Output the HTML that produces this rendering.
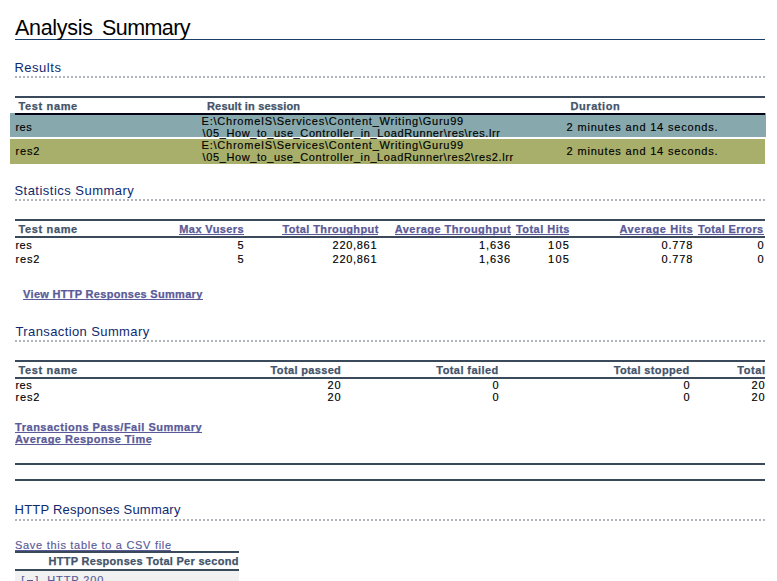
<!DOCTYPE html><html><head><meta charset='utf-8'><style>html,body{margin:0;padding:0;background:#fff;width:777px;height:581px;overflow:hidden;position:relative}</style></head><body><div style='position:absolute;left:10px;top:113px;width:756px;height:24px;background:#87a9ad;'></div><div style='position:absolute;left:10px;top:139px;width:755px;height:25px;background:#a7af6b;'></div><div style='position:absolute;left:15px;top:571px;width:224px;height:10px;background:#f1f1f1;'></div><div style='position:absolute;left:27px;top:580px;width:6px;height:1px;background:#5a5a98;'></div><div style='position:absolute;left:15px;top:39px;width:750px;height:1px;background:#1b3f6c;'></div><div style='position:absolute;left:15px;top:76px;width:750px;height:2px;background:repeating-linear-gradient(90deg,#b0b4bb 0 2px,transparent 2px 4px)'></div><div style='position:absolute;left:15px;top:199px;width:750px;height:2px;background:repeating-linear-gradient(90deg,#b0b4bb 0 2px,transparent 2px 4px)'></div><div style='position:absolute;left:15px;top:340px;width:750px;height:2px;background:repeating-linear-gradient(90deg,#b0b4bb 0 2px,transparent 2px 4px)'></div><div style='position:absolute;left:15px;top:519px;width:750px;height:2px;background:repeating-linear-gradient(90deg,#b0b4bb 0 2px,transparent 2px 4px)'></div><div style='position:absolute;left:15px;top:96px;width:750px;height:2px;background:#3b4a5a;'></div><div style='position:absolute;left:15px;top:219px;width:750px;height:2px;background:#3b4a5a;'></div><div style='position:absolute;left:15px;top:236px;width:750px;height:2px;background:#3b4a5a;'></div><div style='position:absolute;left:15px;top:360px;width:750px;height:2px;background:#3b4a5a;'></div><div style='position:absolute;left:15px;top:377px;width:750px;height:2px;background:#3b4a5a;'></div><div style='position:absolute;left:15px;top:463px;width:750px;height:2px;background:#3b4a5a;'></div><div style='position:absolute;left:15px;top:479px;width:750px;height:2px;background:#3b4a5a;'></div><div style='position:absolute;left:15px;top:113px;width:750px;height:2px;background:#000014;'></div><div style='position:absolute;left:15px;top:551px;width:224px;height:2px;background:#3b4a5a;'></div><div style='position:absolute;left:15px;top:569px;width:224px;height:2px;background:#3b4a5a;'></div><div style='position:absolute;left:15.00px;top:8px;line-height:40px;white-space:pre;font-family:"Liberation Sans",sans-serif;font-size:21.5px;font-weight:normal;letter-spacing:-0.300px;color:#000000;;'>Analysis</div><div style='position:absolute;left:102.10px;top:8px;line-height:40px;white-space:pre;font-family:"Liberation Sans",sans-serif;font-size:21.5px;font-weight:normal;letter-spacing:-0.600px;color:#000000;;'>Summary</div><div style='position:absolute;left:14.40px;top:48px;line-height:40px;white-space:pre;font-family:"Liberation Sans",sans-serif;font-size:13px;font-weight:normal;letter-spacing:0.533px;color:#0e2a6e;-webkit-text-stroke:0px currentColor;'>Results</div><div style='position:absolute;left:18.50px;top:86px;line-height:40px;white-space:pre;font-family:"Liberation Sans",sans-serif;font-size:11.0px;font-weight:bold;letter-spacing:0.637px;color:#435369;-webkit-text-stroke:0.25px currentColor;'>Test name</div><div style='position:absolute;left:207.00px;top:86px;line-height:40px;white-space:pre;font-family:"Liberation Sans",sans-serif;font-size:11.0px;font-weight:bold;letter-spacing:0.163px;color:#435369;-webkit-text-stroke:0.25px currentColor;'>Result in session</div><div style='position:absolute;left:570.50px;top:86px;line-height:40px;white-space:pre;font-family:"Liberation Sans",sans-serif;font-size:11.0px;font-weight:bold;letter-spacing:0.571px;color:#435369;-webkit-text-stroke:0.25px currentColor;'>Duration</div><div style='position:absolute;left:15.40px;top:107px;line-height:40px;white-space:pre;font-family:"Liberation Sans",sans-serif;font-size:11.0px;font-weight:normal;letter-spacing:0.550px;color:#000000;-webkit-text-stroke:0.15px currentColor;'>res</div><div style='position:absolute;left:201.60px;top:101px;line-height:40px;white-space:pre;font-family:"Liberation Sans",sans-serif;font-size:11.0px;font-weight:normal;letter-spacing:0.760px;color:#000000;-webkit-text-stroke:0.15px currentColor;'>E:\ChromeIS\Services\Content_Writing\Guru99</div><div style='position:absolute;left:202.60px;top:113px;line-height:40px;white-space:pre;font-family:"Liberation Sans",sans-serif;font-size:11.0px;font-weight:normal;letter-spacing:0.604px;color:#000000;-webkit-text-stroke:0.15px currentColor;'>\05_How_to_use_Controller_in_LoadRunner\res\res.lrr</div><div style='position:absolute;left:566.60px;top:107px;line-height:40px;white-space:pre;font-family:"Liberation Sans",sans-serif;font-size:11.0px;font-weight:normal;letter-spacing:0.817px;color:#000000;-webkit-text-stroke:0.15px currentColor;'>2 minutes and 14 seconds.</div><div style='position:absolute;left:15.40px;top:131px;line-height:40px;white-space:pre;font-family:"Liberation Sans",sans-serif;font-size:11.0px;font-weight:normal;letter-spacing:0.867px;color:#000000;-webkit-text-stroke:0.15px currentColor;'>res2</div><div style='position:absolute;left:201.60px;top:125px;line-height:40px;white-space:pre;font-family:"Liberation Sans",sans-serif;font-size:11.0px;font-weight:normal;letter-spacing:0.760px;color:#000000;-webkit-text-stroke:0.15px currentColor;'>E:\ChromeIS\Services\Content_Writing\Guru99</div><div style='position:absolute;left:202.60px;top:137px;line-height:40px;white-space:pre;font-family:"Liberation Sans",sans-serif;font-size:11.0px;font-weight:normal;letter-spacing:0.598px;color:#000000;-webkit-text-stroke:0.15px currentColor;'>\05_How_to_use_Controller_in_LoadRunner\res2\res2.lrr</div><div style='position:absolute;left:566.60px;top:131px;line-height:40px;white-space:pre;font-family:"Liberation Sans",sans-serif;font-size:11.0px;font-weight:normal;letter-spacing:0.817px;color:#000000;-webkit-text-stroke:0.15px currentColor;'>2 minutes and 14 seconds.</div><div style='position:absolute;left:14.40px;top:171px;line-height:40px;white-space:pre;font-family:"Liberation Sans",sans-serif;font-size:13px;font-weight:normal;letter-spacing:0.482px;color:#0e2a6e;-webkit-text-stroke:0px currentColor;'>Statistics Summary</div><div style='position:absolute;left:18.50px;top:209px;line-height:40px;white-space:pre;font-family:"Liberation Sans",sans-serif;font-size:11.0px;font-weight:bold;letter-spacing:0.637px;color:#435369;-webkit-text-stroke:0.25px currentColor;'>Test name</div><div style='position:absolute;left:179.30px;top:209px;line-height:40px;white-space:pre;font-family:"Liberation Sans",sans-serif;font-size:11.0px;font-weight:bold;letter-spacing:0.400px;color:#5a5a98;-webkit-text-stroke:0.25px currentColor;'>Max Vusers</div><div style='position:absolute;left:179px;top:234px;width:65px;height:1px;background:#5a5a98'></div><div style='position:absolute;left:282.40px;top:209px;line-height:40px;white-space:pre;font-family:"Liberation Sans",sans-serif;font-size:11.0px;font-weight:bold;letter-spacing:0.380px;color:#5a5a98;-webkit-text-stroke:0.25px currentColor;'>Total Throughput</div><div style='position:absolute;left:282px;top:234px;width:96px;height:1px;background:#5a5a98'></div><div style='position:absolute;left:394.70px;top:209px;line-height:40px;white-space:pre;font-family:"Liberation Sans",sans-serif;font-size:11.0px;font-weight:bold;letter-spacing:0.476px;color:#5a5a98;-webkit-text-stroke:0.25px currentColor;'>Average Throughput</div><div style='position:absolute;left:395px;top:234px;width:116px;height:1px;background:#5a5a98'></div><div style='position:absolute;left:515.90px;top:209px;line-height:40px;white-space:pre;font-family:"Liberation Sans",sans-serif;font-size:11.0px;font-weight:bold;letter-spacing:0.478px;color:#5a5a98;-webkit-text-stroke:0.25px currentColor;'>Total Hits</div><div style='position:absolute;left:516px;top:234px;width:53px;height:1px;background:#5a5a98'></div><div style='position:absolute;left:619.50px;top:209px;line-height:40px;white-space:pre;font-family:"Liberation Sans",sans-serif;font-size:11.0px;font-weight:bold;letter-spacing:0.573px;color:#5a5a98;-webkit-text-stroke:0.25px currentColor;'>Average Hits</div><div style='position:absolute;left:620px;top:234px;width:73px;height:1px;background:#5a5a98'></div><div style='position:absolute;left:698.00px;top:209px;line-height:40px;white-space:pre;font-family:"Liberation Sans",sans-serif;font-size:11.0px;font-weight:bold;letter-spacing:0.327px;color:#5a5a98;-webkit-text-stroke:0.25px currentColor;'>Total Errors</div><div style='position:absolute;left:698px;top:234px;width:66px;height:1px;background:#5a5a98'></div><div style='position:absolute;left:15.40px;top:225px;line-height:40px;white-space:pre;font-family:"Liberation Sans",sans-serif;font-size:11.0px;font-weight:normal;letter-spacing:0.550px;color:#000000;-webkit-text-stroke:0.15px currentColor;'>res</div><div style='position:absolute;left:237.50px;top:225px;line-height:40px;white-space:pre;font-family:"Liberation Sans",sans-serif;font-size:11.0px;font-weight:normal;letter-spacing:0.800px;color:#000000;-webkit-text-stroke:0.15px currentColor;'>5</div><div style='position:absolute;left:332.60px;top:225px;line-height:40px;white-space:pre;font-family:"Liberation Sans",sans-serif;font-size:11.0px;font-weight:normal;letter-spacing:0.700px;color:#000000;-webkit-text-stroke:0.15px currentColor;'>220,861</div><div style='position:absolute;left:479.00px;top:225px;line-height:40px;white-space:pre;font-family:"Liberation Sans",sans-serif;font-size:11.0px;font-weight:normal;letter-spacing:0.925px;color:#000000;-webkit-text-stroke:0.15px currentColor;'>1,636</div><div style='position:absolute;left:548.00px;top:225px;line-height:40px;white-space:pre;font-family:"Liberation Sans",sans-serif;font-size:11.0px;font-weight:normal;letter-spacing:1.300px;color:#000000;-webkit-text-stroke:0.15px currentColor;'>105</div><div style='position:absolute;left:661.40px;top:225px;line-height:40px;white-space:pre;font-family:"Liberation Sans",sans-serif;font-size:11.0px;font-weight:normal;letter-spacing:0.875px;color:#000000;-webkit-text-stroke:0.15px currentColor;'>0.778</div><div style='position:absolute;left:757.50px;top:225px;line-height:40px;white-space:pre;font-family:"Liberation Sans",sans-serif;font-size:11.0px;font-weight:normal;letter-spacing:0.800px;color:#000000;-webkit-text-stroke:0.15px currentColor;'>0</div><div style='position:absolute;left:15.40px;top:239px;line-height:40px;white-space:pre;font-family:"Liberation Sans",sans-serif;font-size:11.0px;font-weight:normal;letter-spacing:0.867px;color:#000000;-webkit-text-stroke:0.15px currentColor;'>res2</div><div style='position:absolute;left:237.50px;top:239px;line-height:40px;white-space:pre;font-family:"Liberation Sans",sans-serif;font-size:11.0px;font-weight:normal;letter-spacing:0.800px;color:#000000;-webkit-text-stroke:0.15px currentColor;'>5</div><div style='position:absolute;left:332.60px;top:239px;line-height:40px;white-space:pre;font-family:"Liberation Sans",sans-serif;font-size:11.0px;font-weight:normal;letter-spacing:0.700px;color:#000000;-webkit-text-stroke:0.15px currentColor;'>220,861</div><div style='position:absolute;left:479.00px;top:239px;line-height:40px;white-space:pre;font-family:"Liberation Sans",sans-serif;font-size:11.0px;font-weight:normal;letter-spacing:0.925px;color:#000000;-webkit-text-stroke:0.15px currentColor;'>1,636</div><div style='position:absolute;left:548.00px;top:239px;line-height:40px;white-space:pre;font-family:"Liberation Sans",sans-serif;font-size:11.0px;font-weight:normal;letter-spacing:1.300px;color:#000000;-webkit-text-stroke:0.15px currentColor;'>105</div><div style='position:absolute;left:661.40px;top:239px;line-height:40px;white-space:pre;font-family:"Liberation Sans",sans-serif;font-size:11.0px;font-weight:normal;letter-spacing:0.875px;color:#000000;-webkit-text-stroke:0.15px currentColor;'>0.778</div><div style='position:absolute;left:757.50px;top:239px;line-height:40px;white-space:pre;font-family:"Liberation Sans",sans-serif;font-size:11.0px;font-weight:normal;letter-spacing:0.800px;color:#000000;-webkit-text-stroke:0.15px currentColor;'>0</div><div style='position:absolute;left:23.10px;top:274px;line-height:40px;white-space:pre;font-family:"Liberation Sans",sans-serif;font-size:11.0px;font-weight:bold;letter-spacing:0.300px;color:#5a5a98;-webkit-text-stroke:0.25px currentColor;'>View HTTP Responses Summary</div><div style='position:absolute;left:23px;top:299px;width:180px;height:1px;background:#5a5a98'></div><div style='position:absolute;left:15.50px;top:312px;line-height:40px;white-space:pre;font-family:"Liberation Sans",sans-serif;font-size:13px;font-weight:normal;letter-spacing:0.389px;color:#0e2a6e;-webkit-text-stroke:0px currentColor;'>Transaction Summary</div><div style='position:absolute;left:18.50px;top:350px;line-height:40px;white-space:pre;font-family:"Liberation Sans",sans-serif;font-size:11.0px;font-weight:bold;letter-spacing:0.637px;color:#435369;-webkit-text-stroke:0.25px currentColor;'>Test name</div><div style='position:absolute;left:270.60px;top:350px;line-height:40px;white-space:pre;font-family:"Liberation Sans",sans-serif;font-size:11.0px;font-weight:bold;letter-spacing:0.345px;color:#435369;-webkit-text-stroke:0.25px currentColor;'>Total passed</div><div style='position:absolute;left:436.30px;top:350px;line-height:40px;white-space:pre;font-family:"Liberation Sans",sans-serif;font-size:11.0px;font-weight:bold;letter-spacing:0.427px;color:#435369;-webkit-text-stroke:0.25px currentColor;'>Total failed</div><div style='position:absolute;left:613.70px;top:350px;line-height:40px;white-space:pre;font-family:"Liberation Sans",sans-serif;font-size:11.0px;font-weight:bold;letter-spacing:0.358px;color:#435369;-webkit-text-stroke:0.25px currentColor;'>Total stopped</div><div style='position:absolute;left:737.20px;top:350px;line-height:40px;white-space:pre;font-family:"Liberation Sans",sans-serif;font-size:11.0px;font-weight:bold;letter-spacing:0.575px;color:#435369;-webkit-text-stroke:0.25px currentColor;'>Total</div><div style='position:absolute;left:15.40px;top:365px;line-height:40px;white-space:pre;font-family:"Liberation Sans",sans-serif;font-size:11.0px;font-weight:normal;letter-spacing:0.550px;color:#000000;-webkit-text-stroke:0.15px currentColor;'>res</div><div style='position:absolute;left:327.60px;top:365px;line-height:40px;white-space:pre;font-family:"Liberation Sans",sans-serif;font-size:11.0px;font-weight:normal;letter-spacing:0.900px;color:#000000;-webkit-text-stroke:0.15px currentColor;'>20</div><div style='position:absolute;left:492.60px;top:365px;line-height:40px;white-space:pre;font-family:"Liberation Sans",sans-serif;font-size:11.0px;font-weight:normal;letter-spacing:0.800px;color:#000000;-webkit-text-stroke:0.15px currentColor;'>0</div><div style='position:absolute;left:683.55px;top:365px;line-height:40px;white-space:pre;font-family:"Liberation Sans",sans-serif;font-size:11.0px;font-weight:normal;letter-spacing:0.800px;color:#000000;-webkit-text-stroke:0.15px currentColor;'>0</div><div style='position:absolute;left:751.40px;top:365px;line-height:40px;white-space:pre;font-family:"Liberation Sans",sans-serif;font-size:11.0px;font-weight:normal;letter-spacing:0.900px;color:#000000;-webkit-text-stroke:0.15px currentColor;'>20</div><div style='position:absolute;left:15.40px;top:377px;line-height:40px;white-space:pre;font-family:"Liberation Sans",sans-serif;font-size:11.0px;font-weight:normal;letter-spacing:0.867px;color:#000000;-webkit-text-stroke:0.15px currentColor;'>res2</div><div style='position:absolute;left:327.60px;top:377px;line-height:40px;white-space:pre;font-family:"Liberation Sans",sans-serif;font-size:11.0px;font-weight:normal;letter-spacing:0.900px;color:#000000;-webkit-text-stroke:0.15px currentColor;'>20</div><div style='position:absolute;left:492.60px;top:377px;line-height:40px;white-space:pre;font-family:"Liberation Sans",sans-serif;font-size:11.0px;font-weight:normal;letter-spacing:0.800px;color:#000000;-webkit-text-stroke:0.15px currentColor;'>0</div><div style='position:absolute;left:683.55px;top:377px;line-height:40px;white-space:pre;font-family:"Liberation Sans",sans-serif;font-size:11.0px;font-weight:normal;letter-spacing:0.800px;color:#000000;-webkit-text-stroke:0.15px currentColor;'>0</div><div style='position:absolute;left:751.40px;top:377px;line-height:40px;white-space:pre;font-family:"Liberation Sans",sans-serif;font-size:11.0px;font-weight:normal;letter-spacing:0.900px;color:#000000;-webkit-text-stroke:0.15px currentColor;'>20</div><div style='position:absolute;left:15.10px;top:407px;line-height:40px;white-space:pre;font-family:"Liberation Sans",sans-serif;font-size:11.0px;font-weight:bold;letter-spacing:0.507px;color:#5a5a98;-webkit-text-stroke:0.25px currentColor;'>Transactions Pass/Fail Summary</div><div style='position:absolute;left:15px;top:432px;width:187px;height:1px;background:#5a5a98'></div><div style='position:absolute;left:15.10px;top:419px;line-height:40px;white-space:pre;font-family:"Liberation Sans",sans-serif;font-size:11.0px;font-weight:bold;letter-spacing:0.475px;color:#5a5a98;-webkit-text-stroke:0.25px currentColor;'>Average Response Time</div><div style='position:absolute;left:15px;top:444px;width:136px;height:1px;background:#5a5a98'></div><div style='position:absolute;left:14.60px;top:490px;line-height:40px;white-space:pre;font-family:"Liberation Sans",sans-serif;font-size:13px;font-weight:normal;letter-spacing:0.200px;color:#0e2a6e;-webkit-text-stroke:0px currentColor;'>HTTP Responses Summary</div><div style='position:absolute;left:15.00px;top:525px;line-height:40px;white-space:pre;font-family:"Liberation Sans",sans-serif;font-size:11.0px;font-weight:normal;letter-spacing:0.704px;color:#5a5a98;-webkit-text-stroke:0.15px currentColor;'>Save this table to a CSV file</div><div style='position:absolute;left:15px;top:550px;width:156px;height:1px;background:#5a5a98'></div><div style='position:absolute;left:48.50px;top:541px;line-height:40px;white-space:pre;font-family:"Liberation Sans",sans-serif;font-size:11.0px;font-weight:bold;letter-spacing:0.293px;color:#435369;-webkit-text-stroke:0.25px currentColor;'>HTTP Responses Total Per second</div><div style='position:absolute;left:21.30px;top:560px;line-height:40px;white-space:pre;font-family:"Liberation Sans",sans-serif;font-size:11.0px;font-weight:normal;letter-spacing:3.650px;color:#5a5a98;-webkit-text-stroke:0.15px currentColor;'>[-]</div><div style='position:absolute;left:47.20px;top:560px;line-height:40px;white-space:pre;font-family:"Liberation Sans",sans-serif;font-size:11.0px;font-weight:normal;letter-spacing:0.900px;color:#5a5a98;-webkit-text-stroke:0.15px currentColor;'>HTTP 200</div></body></html>
